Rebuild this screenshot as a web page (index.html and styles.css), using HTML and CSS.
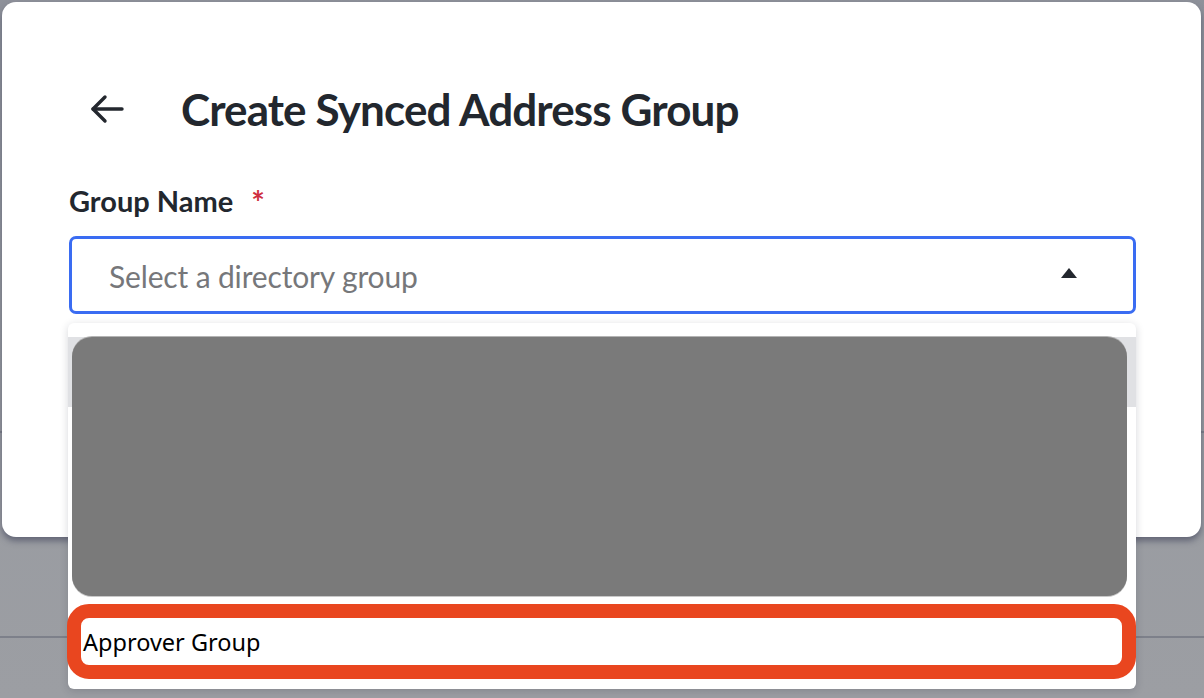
FILE: index.html
```html
<!DOCTYPE html>
<html lang="en">
<head>
<meta charset="utf-8">
<title>Create Synced Address Group</title>
<link rel="stylesheet" href="styles.css">
</head>
<body>
<div class="page">
  <section class="modal">
    <header class="modal-header">
      <button class="back-btn" type="button" aria-label="Back">
        <svg width="36" height="30" viewBox="0 0 36 30" fill="none" stroke="#23272e" stroke-width="3.4" stroke-linecap="round" stroke-linejoin="round">
          <path d="M33 15H4"/>
          <path d="M16 3L4 15L16 27"/>
        </svg>
      </button>
      <h1 class="modal-title">Create Synced Address Group</h1>
    </header>

    <div class="field">
      <label class="field-label">Group Name <span class="required">*</span></label>
      <div class="select-wrap">
        <div class="select open">
          <span class="placeholder">Select a directory group</span>
          <span class="caret"></span>
        </div>
        <div class="menu">
          <div class="menu-options">
            <div class="option active"></div>
            <div class="redacted"></div>
          </div>
          <div class="option marked">Approver Group</div>
        </div>
      </div>
    </div>
  </section>
</div>
</body>
</html>
```

FILE: styles.css
```css
* {
  box-sizing: border-box;
}

html, body {
  margin: 0;
  padding: 0;
}

body {
  width: 1204px;
  height: 698px;
  overflow: hidden;
  font-family: "Lato", "Open Sans", sans-serif;
  color: #22272e;
  background-color: #9b9da2;
  background-image:
    linear-gradient(to bottom, transparent 431px, #7d808a 431px, #7d808a 433px, transparent 433px),
    linear-gradient(to bottom, transparent 636px, #7d808a 636px, #7d808a 638px, transparent 638px),
    linear-gradient(to bottom, #8e919a 0, #979aa0 300px, #9c9ea3 698px);
}

.page {
  padding: 2px 3px 0 2px;
}

.modal {
  position: relative;
  width: 1199px;
  height: 535px;
  background: #ffffff;
  border-radius: 14px;
  box-shadow: 0 4px 6px rgba(52, 56, 82, 0.55);
  padding: 83px 0 0 0;
}

.modal-header {
  display: flex;
  align-items: center;
  height: 48px;
  padding-left: 86px;
}

.back-btn {
  display: flex;
  align-items: center;
  justify-content: center;
  width: 38px;
  height: 32px;
  padding: 0;
  border: 0;
  background: none;
  margin-right: 55px;
}

.modal-title {
  margin: 0;
  font-size: 44px;
  font-weight: 700;
  line-height: 48px;
  color: #22272e;
  letter-spacing: -0.88px;
}

.field {
  padding-left: 67px;
  margin-top: 50px;
}

.field-label {
  display: block;
  font-size: 29px;
  font-weight: 700;
  line-height: 36px;
  color: #22272e;
}

.required {
  color: #cf2f3f;
  margin-left: 11px;
  font-size: 32px;
  line-height: 0;
  vertical-align: -3px;
}

.select-wrap {
  position: relative;
  width: 1067px;
  margin-top: 17px;
}

.select {
  display: flex;
  align-items: center;
  justify-content: space-between;
  height: 78px;
  border: 3px solid #3a6cf2;
  border-radius: 7px;
  padding: 0 56px 0 37px;
  background: #fff;
}

.placeholder {
  font-size: 30px;
  color: #76777a;
  padding-top: 2px;
  letter-spacing: -0.15px;
}

.caret {
  width: 0;
  height: 0;
  border-left: 8px solid transparent;
  border-right: 8px solid transparent;
  border-bottom: 10px solid #23272e;
  margin-top: -4px;
}

.menu {
  position: absolute;
  top: 87px;
  left: -1px;
  width: 1068px;
  height: 366px;
  background: #ffffff;
  border-radius: 6px;
  box-shadow: 0 2px 8px rgba(30, 34, 50, 0.18);
  padding: 14px 0 10px;
  display: flex;
  flex-direction: column;
  z-index: 5;
}

.menu-options {
  position: relative;
  height: 260px;
}

.option.active {
  height: 70px;
  background: #e0e1e4;
}

.redacted {
  position: absolute;
  top: 0;
  left: 4px;
  right: 9px;
  bottom: 0;
  background: #7a7a7a;
  border-radius: 20px;
  box-shadow: 0 -1px 0 #b4b4b4, 0 1px 0 #c9c9c9;
}

.option.marked {
  display: flex;
  align-items: center;
  height: 75px;
  margin: 8px 0 0 -1px;
  border: 14px solid #e9461f;
  border-radius: 22px;
  padding-left: 2px;
  font-family: "Noto Sans", "DejaVu Sans", sans-serif;
  font-size: 23.5px;
  color: #000000;
  background: #ffffff;
}
```
